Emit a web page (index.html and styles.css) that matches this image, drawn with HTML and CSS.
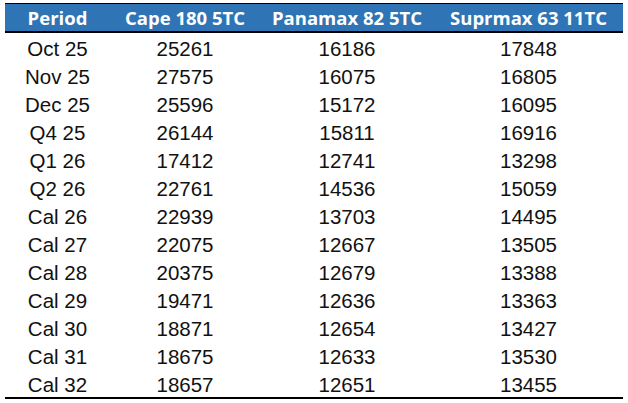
FILE: index.html
```html
<!DOCTYPE html>
<html>
<head>
<meta charset="utf-8">
<link rel="stylesheet" href="styles.css">
</head>
<body>
<div class="wrap">
<table class="grid">
  <colgroup>
    <col class="c1"><col class="c2"><col class="c3"><col class="c4">
  </colgroup>
  <thead>
    <tr><th>Period</th><th>Cape 180 5TC</th><th>Panamax 82 5TC</th><th>Suprmax 63 11TC</th></tr>
  </thead>
  <tbody>
    <tr><td>Oct 25</td><td>25261</td><td>16186</td><td>17848</td></tr>
    <tr><td>Nov 25</td><td>27575</td><td>16075</td><td>16805</td></tr>
    <tr><td>Dec 25</td><td>25596</td><td>15172</td><td>16095</td></tr>
    <tr><td>Q4 25</td><td>26144</td><td>15811</td><td>16916</td></tr>
    <tr><td>Q1 26</td><td>17412</td><td>12741</td><td>13298</td></tr>
    <tr><td>Q2 26</td><td>22761</td><td>14536</td><td>15059</td></tr>
    <tr><td>Cal 26</td><td>22939</td><td>13703</td><td>14495</td></tr>
    <tr><td>Cal 27</td><td>22075</td><td>12667</td><td>13505</td></tr>
    <tr><td>Cal 28</td><td>20375</td><td>12679</td><td>13388</td></tr>
    <tr><td>Cal 29</td><td>19471</td><td>12636</td><td>13363</td></tr>
    <tr><td>Cal 30</td><td>18871</td><td>12654</td><td>13427</td></tr>
    <tr><td>Cal 31</td><td>18675</td><td>12633</td><td>13530</td></tr>
    <tr><td>Cal 32</td><td>18657</td><td>12651</td><td>13455</td></tr>
  </tbody>
</table>
</div>
</body>
</html>
```
FILE: styles.css
```css
html, body {
  margin: 0;
  padding: 0;
  background: #ffffff;
}
.wrap {
  padding: 3px 0 0 5px;
}
.grid {
  border-collapse: collapse;
  table-layout: fixed;
  width: 618px;
}
.c1 { width: 105px; }
.c2 { width: 150px; }
.c3 { width: 174px; }
.c4 { width: 189px; }
.grid th {
  background: #2f75b5;
  color: #ffffff;
  font-family: "Open Sans", "DejaVu Sans", sans-serif;
  font-weight: 700;
  font-size: 18.5px;
  height: 27px;
  padding: 0;
  line-height: 27px;
  text-align: center;
  border-top: 1.5px solid #000000;
  border-bottom: 2px solid #000000;
  white-space: nowrap;
}
.grid td {
  font-family: "Liberation Sans", Arial, sans-serif;
  font-size: 20.5px;
  color: #111111;
  height: 28px;
  box-sizing: border-box;
  padding: 4px 0 0;
  line-height: 24px;
  text-align: center;
}
.grid tbody tr:last-child td {
  border-bottom: 2px solid #000000;
}
```
